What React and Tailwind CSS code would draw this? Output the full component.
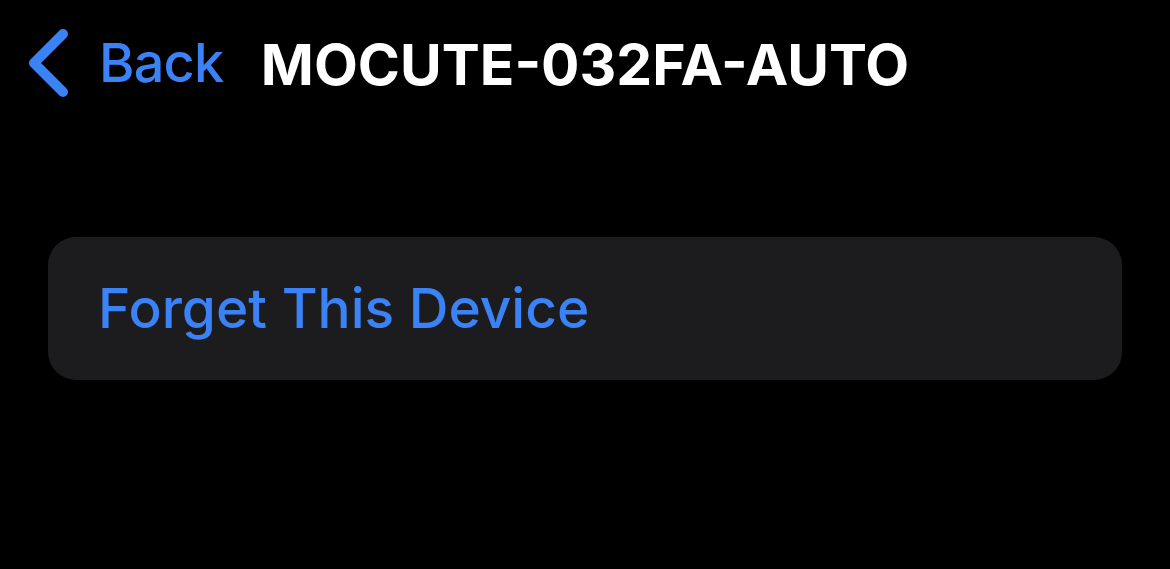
export default function App() {
  return (
    <div className="min-h-[569px] w-[1170px] bg-black font-['Inter','Liberation_Sans',sans-serif]">
      <header className="grid h-[128px] grid-cols-[1fr_auto_1fr] items-center">
        <button className="flex items-center gap-[30px] pl-[27px] pb-[2px] text-[#3a82f6]">
          <svg width="42" height="70" viewBox="0 0 42 70" fill="none">
            <path d="M36 6 L7 35 L36 64" stroke="#3a82f6" strokeWidth="10" strokeLinecap="round" strokeLinejoin="round" />
          </svg>
          <span className="text-[54px] font-medium leading-none tracking-[-0.8px]">Back</span>
        </button>
        <h1 className="text-[57px] font-bold leading-none text-white">MOCUTE-032FA-AUTO</h1>
        <div />
      </header>
      <main className="px-[48px] pt-[109px]">
        <button className="flex h-[143px] w-full items-center rounded-[28px] bg-[#1c1c1e] px-[50px] text-left">
          <span className="text-[55px] font-medium leading-none tracking-[0px] text-[#3a82f6]">Forget This Device</span>
        </button>
      </main>
    </div>
  );
}
